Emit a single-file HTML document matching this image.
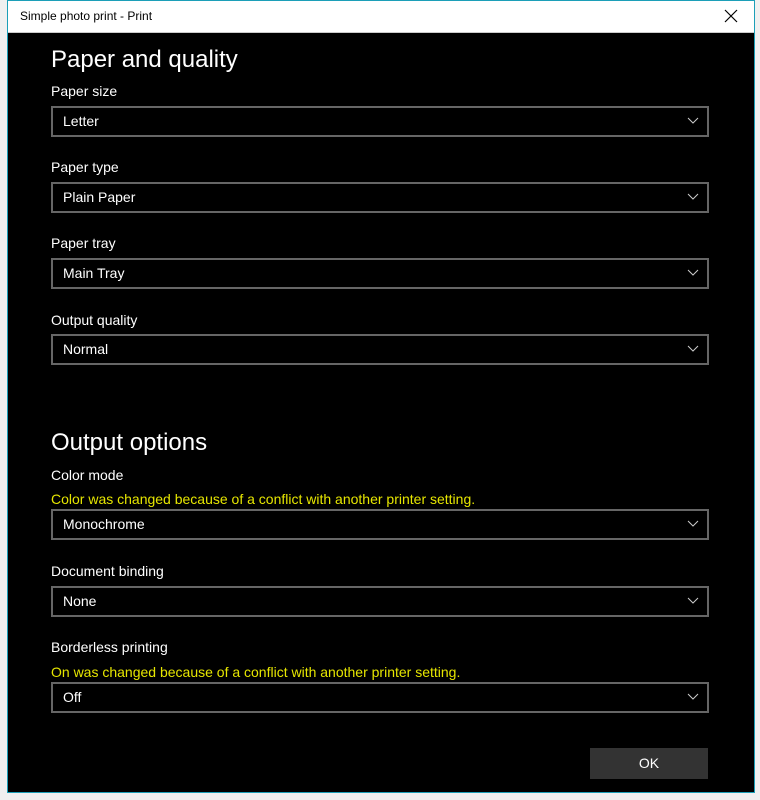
<!DOCTYPE html>
<html><head><style>
body{margin:0;width:760px;height:800px;background:#f0f0f0;position:relative;overflow:hidden;font-family:"Liberation Sans",sans-serif;}
.dlg{position:absolute;left:7px;top:0;width:746px;height:791px;border:1px solid #1c9fb8;background:#000;}
.tb{position:absolute;left:0;top:0;width:746px;height:31px;background:#fff;border-bottom:1px solid #ccc;}
.tb span{position:absolute;left:12px;top:8px;font-size:12px;color:#000;}
.x{position:absolute;right:16px;top:8px;}
.t{position:absolute;left:51px;color:#fff;font-size:14px;white-space:nowrap;}
.h{position:absolute;left:51px;color:#fff;font-size:24px;}
.w{position:absolute;left:51px;color:#e6e600;font-size:14px;white-space:nowrap;}
.dd{position:absolute;left:51px;width:654px;height:27px;border:2px solid #666;color:#fff;font-size:14px;}
.dd span{position:absolute;left:10px;top:5px;}
.dd svg{position:absolute;right:8px;top:9px;}
.ok{position:absolute;left:590px;top:748px;width:118px;height:31px;background:#333;color:#fff;font-size:14px;text-align:center;line-height:31px;}
</style></head><body>
<div class="dlg">
<div class="tb"><span>Simple photo print - Print</span>
<svg class="x" width="14" height="14" viewBox="0 0 14 14"><path d="M1 1L13 13M13 1L1 13" stroke="#000" stroke-width="1.2"/></svg></div>
</div>
<div class="h" style="top:46px">Paper and quality</div>
<div class="t" style="top:83px">Paper size</div>
<div class="dd" style="top:106px"><span>Letter</span><svg width="12" height="8"><path d="M1 1L6 6L11 1" stroke="#ccc" fill="none"/></svg></div>
<div class="t" style="top:159px">Paper type</div>
<div class="dd" style="top:182px"><span>Plain Paper</span><svg width="12" height="8"><path d="M1 1L6 6L11 1" stroke="#ccc" fill="none"/></svg></div>
<div class="t" style="top:235px">Paper tray</div>
<div class="dd" style="top:258px"><span>Main Tray</span><svg width="12" height="8"><path d="M1 1L6 6L11 1" stroke="#ccc" fill="none"/></svg></div>
<div class="t" style="top:312px">Output quality</div>
<div class="dd" style="top:334px"><span>Normal</span><svg width="12" height="8"><path d="M1 1L6 6L11 1" stroke="#ccc" fill="none"/></svg></div>
<div class="h" style="top:429px">Output options</div>
<div class="t" style="top:467px">Color mode</div>
<div class="w" style="top:491px">Color was changed because of a conflict with another printer setting.</div>
<div class="dd" style="top:509px"><span>Monochrome</span><svg width="12" height="8"><path d="M1 1L6 6L11 1" stroke="#ccc" fill="none"/></svg></div>
<div class="t" style="top:563px">Document binding</div>
<div class="dd" style="top:586px"><span>None</span><svg width="12" height="8"><path d="M1 1L6 6L11 1" stroke="#ccc" fill="none"/></svg></div>
<div class="t" style="top:639px">Borderless printing</div>
<div class="w" style="top:664px">On was changed because of a conflict with another printer setting.</div>
<div class="dd" style="top:682px"><span>Off</span><svg width="12" height="8"><path d="M1 1L6 6L11 1" stroke="#ccc" fill="none"/></svg></div>
<div class="ok">OK</div>
</body></html>
